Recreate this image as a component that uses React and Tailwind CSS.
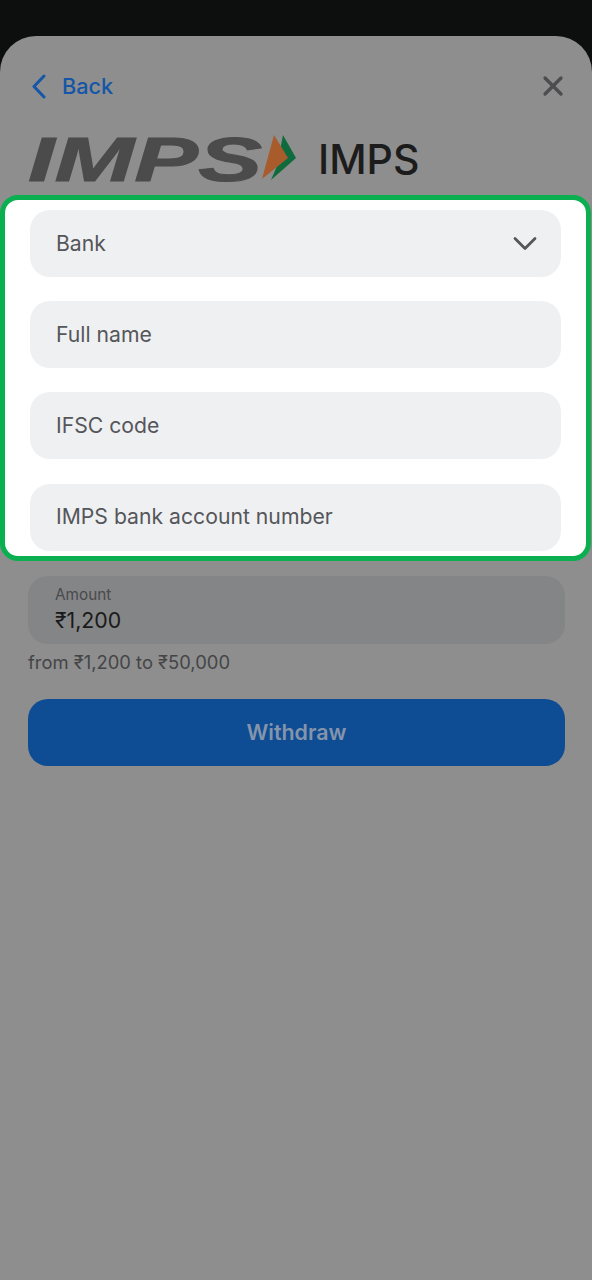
import React from 'react'
import { X } from 'lucide-react'

const fields = ['Full name', 'IFSC code', 'IMPS bank account number']

function ImpsLogo() {
  return (
    <svg width="272" height="52" viewBox="0 0 272 52" className="block overflow-visible">
      <text
        x="0"
        y="49"
        textLength="234"
        lengthAdjust="spacingAndGlyphs"
        fill="#4b4b4b"
        stroke="#4b4b4b"
        strokeWidth="1"
        style={{ fontFamily: '"Liberation Sans", sans-serif', fontSize: 63, fontWeight: 700, fontStyle: 'italic' }}
      >
        IMPS
      </text>
      <polygon points="255,3 268,26 243,48 249,34" fill="#0f6b3c" />
      <polygon points="246,3 260,26 234,47" fill="#a85c2c" />
    </svg>
  )
}

export default function App() {
  return (
    <div className="min-h-[1280px] bg-[#0d0f0f] pt-9 font-['Inter',sans-serif]">
      <div className="min-h-[1244px] rounded-t-[36px] bg-[#8e8e8e]">
        {/* Header */}
        <div className="flex h-[70px] items-end justify-between pl-[31px] pr-[23px] pb-[2px]">
          <div className="flex items-center gap-[16px] text-[#1556a8]">
            <svg width="15" height="25" viewBox="0 0 15 25" fill="none" stroke="currentColor" strokeWidth="3" strokeLinecap="round" strokeLinejoin="round">
              <path d="M13 2 3 12.5 13 23" />
            </svg>
            <span className="text-[21.7px] font-medium leading-[36px]">Back</span>
          </div>
          <X size={32} strokeWidth={2.5} className="mb-[2px] text-[#4d4d4f]" />
        </div>

        <div className="mt-[26px] flex h-[63px] items-start pl-[28px]">
          <ImpsLogo />
          <span className="ml-[18px] mt-[2px] text-[41px] font-[550] leading-[50px] text-[#1c1c1c]">IMPS</span>
        </div>

        {/* Highlighted form */}
        <div className="mr-[1px] rounded-[18px] border-[5px] border-[#0ab04f] bg-white pb-[5px] pl-[25px] pr-[25px] pt-[10px]">
          <div className="flex h-[67px] items-center justify-between rounded-[20px] bg-[#eff0f2] pl-[26px] pr-[24px] text-[21.2px] text-[#55565a]">
            Bank
            <svg width="24" height="15" viewBox="0 0 24 15" fill="none" stroke="currentColor" strokeWidth="2.8" strokeLinecap="round" strokeLinejoin="round">
              <path d="M2 2.5 12 12.5 22 2.5" />
            </svg>
          </div>
          {fields.map(label => (
            <div
              key={label}
              className="mt-[24.2px] flex h-[67px] items-center rounded-[20px] bg-[#eff0f2] pl-[26px] text-[21.2px] text-[#55565a]"
            >
              {label}
            </div>
          ))}
        </div>

        <div className="pl-[28px] pr-[27px] pt-[15px]">
          <div className="flex h-[68px] flex-col justify-center rounded-[20px] bg-[#848586] pl-[27px]">
            <span className="text-[15.3px] leading-[20px] text-[#4a4a4c]">Amount</span>
            <span className="text-[21.3px] leading-[30px] text-[#1a1a1a]">₹1,200</span>
          </div>
          <p className="mt-[5px] text-[18.4px] leading-[26px] text-[#454547]">from ₹1,200 to ₹50,000</p>
          <button className="mt-[24px] h-[67px] w-full rounded-[20px] bg-[#0e4c94] text-[21.4px] font-semibold text-[#8495ab]">
            Withdraw
          </button>
        </div>
      </div>
    </div>
  )
}
